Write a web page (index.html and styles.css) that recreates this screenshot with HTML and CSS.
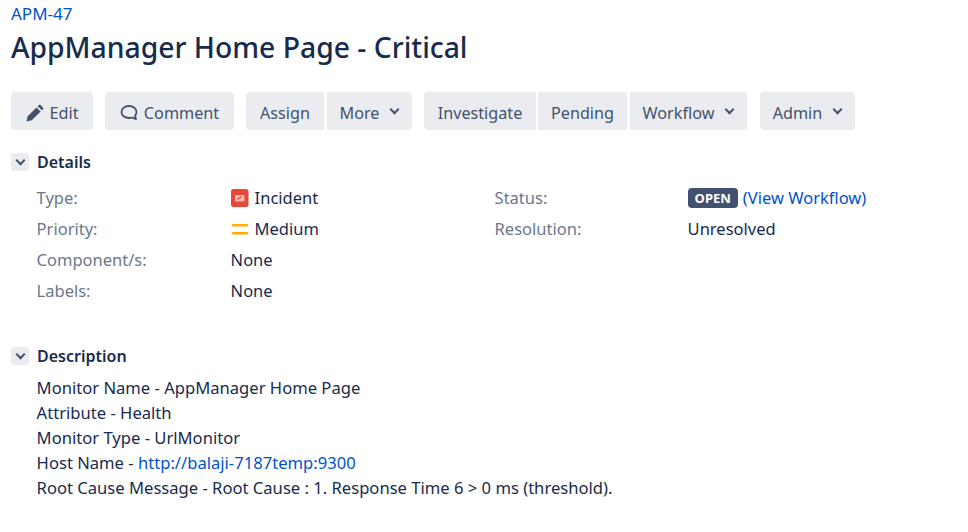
FILE: index.html
```html
<!DOCTYPE html>
<html lang="en">
<head>
    <meta charset="UTF-8">
    <meta name="viewport" content="width=device-width, initial-scale=1.0">
    <title>APM-47 AppManager Home Page - Critical</title>
    <link rel="stylesheet" href="styles.css">
</head>
<body>
    <header class="issue-header">
        <a class="issue-key" href="#">APM-47</a>
        <h1>AppManager Home Page - Critical</h1>
    </header>

    <div class="toolbar">
        <div class="btn-group">
            <a class="btn btn-edit" href="#">
                <svg class="icon" viewBox="0 0 18 18" width="18" height="18"><path d="M0.500 17.500l1.200-5.300 8.800-8.800 4.100 4.100-8.800 8.800z M11.700 2.200l1.100-1.100c.5-.5 1.200-.5 1.700 0l2.400 2.400c.5.5.5 1.200 0 1.700l-1.100 1.100z" fill="#42526e"/></svg>
                Edit
            </a>
        </div>
        <div class="btn-group">
            <a class="btn btn-comment" href="#">
                <svg class="icon" viewBox="0 0 18 18" width="18" height="18"><path d="M9 2c-4.200 0-7.500 2.500-7.500 6s3.300 6 7.500 6c1.100 0 2.200-.2 3.100-.5l3.900 1.600-.9-3.500c1-1 1.400-2.200 1.400-3.600C16.500 4.500 13.200 2 9 2z" fill="none" stroke="#42526e" stroke-width="1.800" stroke-linejoin="round"/></svg>
                Comment
            </a>
        </div>
        <div class="btn-group">
            <a class="btn btn-assign" href="#">Assign</a>
            <a class="btn btn-more" href="#">More <span class="caret"></span></a>
        </div>
        <div class="btn-group">
            <a class="btn btn-investigate" href="#">Investigate</a>
            <a class="btn btn-pending" href="#">Pending</a>
            <a class="btn btn-workflow" href="#">Workflow <span class="caret"></span></a>
        </div>
        <div class="btn-group">
            <a class="btn btn-admin" href="#">Admin <span class="caret"></span></a>
        </div>
    </div>

    <section class="module module-details">
        <h2 class="module-head"><span class="toggle"><span class="caret"></span></span>Details</h2>
        <div class="details-grid">
            <div class="name">Type:</div>
            <div class="value">
                <svg class="type-icon" viewBox="0 0 18 18" width="18" height="18"><rect width="17.500" height="18" rx="2.500" fill="#e5493a"/><rect x="4" y="6" width="9.500" height="6.500" rx="1" fill="#f6b8b1"/><path d="M6.500 10.500l4-3" stroke="#e5493a" stroke-width="1.400"/></svg>
                Incident
            </div>
            <div class="name">Status:</div>
            <div class="value"><span class="lozenge">OPEN</span> <a href="#">(View Workflow)</a></div>

            <div class="name">Priority:</div>
            <div class="value">
                <svg class="type-icon" viewBox="0 0 18 18" width="18" height="18"><path d="M2 5.200h14M2 13.200h14" stroke="#ffab00" stroke-width="2.400" stroke-linecap="round"/></svg>
                Medium
            </div>
            <div class="name">Resolution:</div>
            <div class="value">Unresolved</div>

            <div class="name">Component/s:</div>
            <div class="value wide">None</div>

            <div class="name">Labels:</div>
            <div class="value wide">None</div>
        </div>
    </section>

    <section class="module module-description">
        <h2 class="module-head"><span class="toggle"><span class="caret"></span></span>Description</h2>
        <div class="description">
            <p>Monitor Name - AppManager Home Page</p>
            <p>Attribute - Health</p>
            <p>Monitor Type - UrlMonitor</p>
            <p>Host Name - <a href="#">http://balaji-7187temp:9300</a></p>
            <p>Root Cause Message - Root Cause : 1. Response Time 6 &gt; 0 ms (threshold).</p>
        </div>
    </section>
</body>
</html>
```

FILE: styles.css
```css
body {
    margin: 0;
    padding: 0 11px;
    background: #fff;
    color: #172b4d;
    font-family: "Noto Sans", "Open Sans", Arial, sans-serif;
    font-size: 16.500px;
}
a {
    color: #0052cc;
    text-decoration: none;
}

.issue-header {
    height: 92px;
}
.issue-key {
    display: block;
    height: 27px;
    line-height: 28px;
    font-size: 17px;
}
h1 {
    margin: 0;
    font-size: 28.300px;
    font-weight: 500;
    line-height: 40px;
    color: #172b4d;
}

.toolbar {
    display: flex;
    gap: 12px;
}
.btn-group {
    display: flex;
    gap: 2px;
}
.btn {
    display: flex;
    align-items: center;
    justify-content: center;
    gap: 6px;
    box-sizing: border-box;
    height: 38px;
    padding-top: 3px;
    font-size: 16.200px;
    background: #ebecf0;
    color: #42526e;
    border-radius: 0;
}
.btn-group .btn:first-child {
    border-top-left-radius: 4px;
    border-bottom-left-radius: 4px;
}
.btn-group .btn:last-child {
    border-top-right-radius: 4px;
    border-bottom-right-radius: 4px;
}
.btn-edit { width: 82px; }
.btn-comment { width: 129px; }
.btn-assign { width: 78px; }
.btn-more { width: 85px; margin-left: 1px; }
.btn-investigate { width: 112px; }
.btn-pending { width: 89px; }
.btn-workflow { width: 117px; margin-left: 1px; }
.btn-admin { width: 95px; margin-left: 1px; }

.caret {
    display: inline-block;
    width: 7px;
    height: 7px;
    margin: -7px 1px 0 6px;
    border-right: 2.500px solid #42526e;
    border-bottom: 2.500px solid #42526e;
    box-sizing: border-box;
    transform: rotate(45deg);
}

.module-details {
    margin-top: 22px;
}
.module-description {
    margin-top: 40px;
}
.module-head {
    display: flex;
    align-items: center;
    gap: 8px;
    margin: 0;
    height: 20px;
    font-size: 16px;
    font-weight: 600;
}
.toggle {
    display: flex;
    align-items: center;
    justify-content: center;
    width: 18px;
    height: 18px;
    background: #ebecf0;
    border-radius: 3px;
}
.toggle .caret {
    margin: -3px 0 0;
}

.details-grid {
    display: grid;
    grid-template-columns: 194px 264px 193px 1fr;
    grid-auto-rows: 31px;
    align-items: center;
    margin: 10px 0 0 25.600px;
}
.name {
    color: #6b778c;
}
.value {
    display: flex;
    align-items: center;
    gap: 6px;
}
.value.wide {
    grid-column: 2 / 5;
}
.type-icon {
    flex: none;
}

.lozenge {
    padding: 0 7px;
    height: 20px;
    line-height: 20px;
    font-size: 13px;
    font-weight: 700;
    color: #fff;
    background: #42526e;
    border-radius: 4px;
}
.value .lozenge {
    margin-right: -1px;
}

.description {
    margin: 9px 0 0 25.600px;
    font-size: 16.600px;
}
.description p {
    margin: 0;
    line-height: 25px;
}
```
